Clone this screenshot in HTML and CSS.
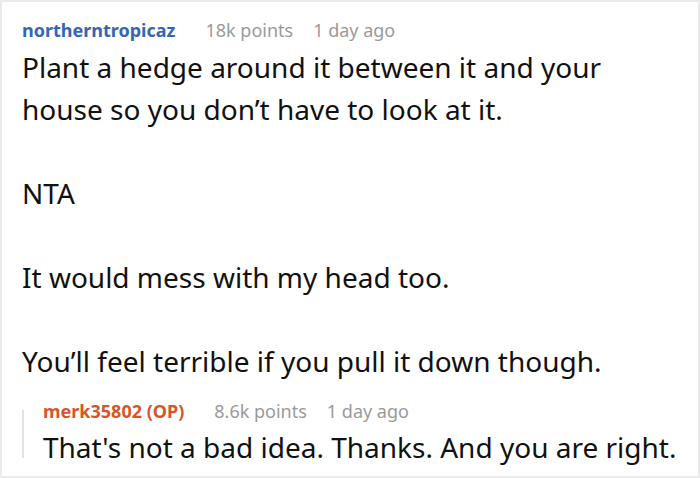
FILE: index.html
```html
<!DOCTYPE html>
<html>
<head>
<meta charset="utf-8">
<link rel="stylesheet" href="styles.css">
</head>
<body>
<div class="card">
  <div class="meta">
    <span class="author">northerntropicaz</span>
    <span class="info">18k points</span>
    <span class="info">1 day ago</span>
  </div>
  <div class="body main">
    <p>Plant a hedge around it between it and your house so you don’t have to look at it.</p>
    <p>NTA</p>
    <p>It would mess with my head too.</p>
    <p>You’ll feel terrible if you pull it down though.</p>
  </div>
  <div class="reply">
    <div class="rail"></div>
    <div class="reply-content">
      <div class="meta">
        <span class="author op">merk35802 (OP)</span>
        <span class="info">8.6k points</span>
        <span class="info">1 day ago</span>
      </div>
      <div class="body">
        <p>That's not a bad idea. Thanks. And you are right.</p>
      </div>
    </div>
  </div>
</div>
</body>
</html>
```
FILE: styles.css
```css
html, body {
  margin: 0;
  padding: 0;
  background: #fff;
}
.card {
  box-sizing: border-box;
  width: 700px;
  height: 478px;
  border: 2px solid #ebebeb;
  padding: 17px 0 0 20px;
  font-family: "Noto Sans", "Open Sans", sans-serif;
  overflow: hidden;
}
.meta {
  display: flex;
  gap: 20px;
  font-size: 18px;
  line-height: 22px;
  align-items: baseline;
}
.author {
  font-weight: 700;
  color: #3565b5;
  margin-right: 10px;
}
.author.op {
  color: #d8552a;
}
.info {
  color: #9a9a9a;
}
.body {
  margin-top: 5px;
  font-size: 28px;
  line-height: 42px;
  color: #111;
}
.body.main {
  padding-right: 50px;
}
.body p {
  margin: 0 0 42px 0;
}
.body p:last-child {
  margin-bottom: 0;
}
.reply {
  display: flex;
  margin-top: 18px;
}
.rail {
  width: 2px;
  flex: none;
  background: #e3e3e3;
  margin: 10px 0 10px 0;
}
.reply-content {
  padding-left: 19px;
}
.reply .body {
  margin-top: 4px;
}
```
